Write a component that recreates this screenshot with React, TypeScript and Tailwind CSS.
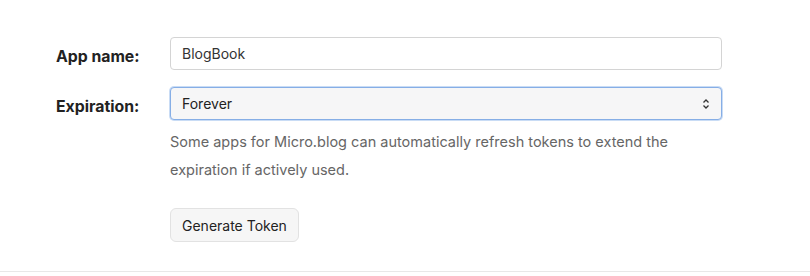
import React from 'react';

export default function App() {
    return (
        <div className="w-[810px] h-[276px] bg-white font-['Inter',sans-serif] text-[#222]">
            <div className="h-[272px] border-b border-[#e8e8e8] pl-[56px] pt-[37px]">
                <div className="flex items-center">
                    <label className="w-[114px] pt-[6px] text-[15.8px] font-bold">App name:</label>
                    <input
                        type="text"
                        defaultValue="BlogBook"
                        className="w-[552px] h-[33px] px-[11px] text-[14px] text-[#333] border border-[#d4d4d4] rounded-[4px] bg-white outline-none"
                    />
                </div>
                <div className="flex items-center mt-[17px]">
                    <label className="w-[114px] pt-[6px] text-[15.8px] font-bold">Expiration:</label>
                    <div className="relative w-[552px] h-[33px] flex items-center px-[11px] text-[14px] text-[#222] border border-[#86aee6] rounded-[4px] bg-[#f6f6f7] shadow-[0_0_0_1px_#c9dcf5]">
                        <span>Forever</span>
                        <svg className="absolute right-[11px]" width="8" height="12" viewBox="0 0 8 12" fill="none" stroke="#333" strokeWidth="1.3">
                            <path d="M1.5 4.5 L4 2 L6.5 4.5" />
                            <path d="M1.5 7.5 L4 10 L6.5 7.5" />
                        </svg>
                    </div>
                </div>
                <div className="ml-[114px] mt-[8px] w-[520px]">
                    <p className="text-[14.5px] leading-[28px] text-[#666]">
                        Some apps for Micro.blog can automatically refresh tokens to extend the expiration if actively used.
                    </p>
                    <button className="mt-[24px] h-[34px] px-[11px] text-[14px] text-[#222] bg-[#f6f6f6] border border-[#e2e2e2] rounded-[6px]">
                        Generate Token
                    </button>
                </div>
            </div>
        </div>
    );
}
